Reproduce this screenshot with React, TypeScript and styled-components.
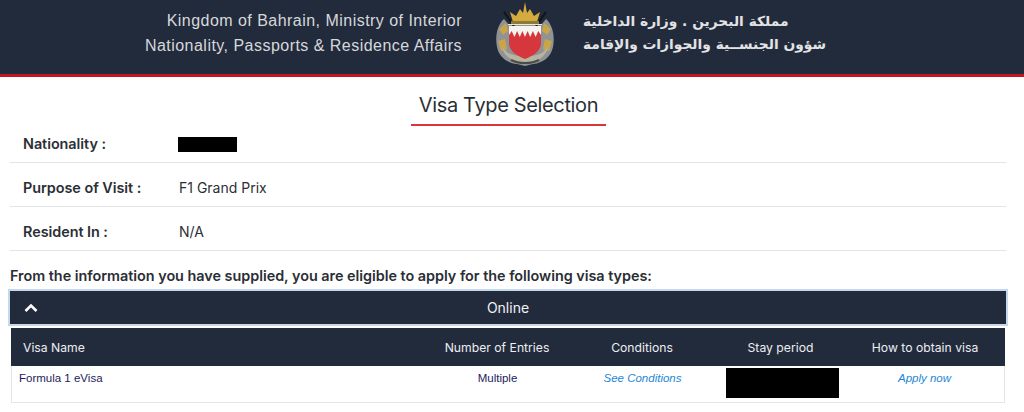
import React from "react";
import styled, { createGlobalStyle } from "styled-components";

const Global = createGlobalStyle`
  html, body { margin: 0; padding: 0; background: #fff; }
  body { font-family: Inter, "Liberation Sans", sans-serif; color: #212529; overflow: hidden; }
`;

const Page = styled.div`
  width: 1024px;
  height: 412px;
  overflow: hidden;
`;

const Banner = styled.header`
  height: 74px;
  background: #222b3c;
  border-bottom: 3px solid #c2171d;
  display: flex;
  align-items: center;
  padding-left: 130px;
`;

const EnglishTitle = styled.div`
  width: 332px;
  text-align: right;
  font-family: "Liberation Sans", Arial, sans-serif;
  font-size: 16px;
  line-height: 25px;
  letter-spacing: 0.47px;
  color: #d6d8db;
  margin-top: -8px;
  white-space: nowrap;
`;

const Crest = styled.svg`
  width: 60px;
  height: 66px;
  margin-left: 33px;
  margin-top: -6px;
  flex: none;
`;

const ArabicTitle = styled.div`
  margin-left: 28px;
  width: 243px;
  direction: rtl;
  text-align: left;
  font-family: "DejaVu Sans", sans-serif;
  font-size: 13.8px;
  font-weight: 700;
  line-height: 23px;
  color: #e2e3e5;
  white-space: nowrap;
  margin-top: -8px;
`;

const Heading = styled.h1`
  width: 195px;
  margin: 15px auto 0 411px;
  padding-bottom: 5px;
  border-bottom: 2px solid #d9363a;
  font-size: 20px;
  font-weight: 400;
  line-height: 27px;
  text-align: center;
  letter-spacing: -0.35px;
  color: #2a2f36;
`;

const Details = styled.div`
  margin: 0 18px 0 10px;
`;

const DetailRow = styled.div`
  box-sizing: border-box;
  height: 44px;
  border-bottom: 1px solid #e3e4e6;
  display: flex;
  align-items: flex-end;
  padding: 0 0 9px 13px;
  font-size: 14px;
  line-height: 18px;
  color: #2b2f35;

  &:first-child {
    height: 37px;
  }
`;

const DetailLabel = styled.div`
  width: 155px;
  font-size: 14.4px;
  font-weight: 600;
  letter-spacing: -0.04px;
`;

const DetailValue = styled.div`
  padding-left: 1px;
`;

const Redaction = styled.div<{ $w: number; $h: number }>`
  width: ${(p) => p.$w}px;
  height: ${(p) => p.$h}px;
  background: #000;
`;

const NationalityRedaction = styled(Redaction)`
  margin-bottom: 1px;
`;

const Intro = styled.p`
  margin: 16px 0 0 10px;
  font-size: 14.4px;
  font-weight: 600;
  line-height: 18px;
  letter-spacing: -0.02px;
  color: #2a2e35;
`;

const AccordionBar = styled.div`
  position: relative;
  margin: 6px 18px 0 10px;
  height: 33px;
  background: #222b3c;
  box-shadow: 0 0 0 2px #c6d8ee;
  display: flex;
  align-items: center;
  justify-content: center;
  color: #f1f2f4;
  font-size: 14px;
`;

const Chevron = styled.svg`
  position: absolute;
  left: 14px;
  top: 12px;
  width: 14px;
  height: 10px;
`;

const VisaTable = styled.div`
  margin: 4px 19px 0 11px;
  border: 1px solid #e5e6e8;
  border-top: 0;
`;

const VisaGrid = styled.div`
  display: grid;
  grid-template-columns: 420px 132px 158px 124px 1fr;
`;

const HeadRow = styled(VisaGrid)`
  box-sizing: border-box;
  height: 38px;
  margin: 0 -1px;
  padding-top: 1px;
  background: #222b3c;
  color: #eceef0;
  font-size: 12.2px;
  align-items: center;
`;

const HeadCell = styled.div<{ $left?: boolean }>`
  text-align: ${(p) => (p.$left ? "left" : "center")};
  padding-left: ${(p) => (p.$left ? "12px" : "0")};
`;

const StayHeadCell = styled(HeadCell)`
  padding-right: 5px;
`;

const BodyRow = styled(VisaGrid)`
  height: 36px;
  font-family: "Liberation Sans", Arial, sans-serif;
  font-size: 11.5px;
  line-height: 13px;
  color: #241d5c;
`;

const BodyCell = styled.div<{ $left?: boolean }>`
  padding-top: 6px;
  text-align: ${(p) => (p.$left ? "left" : "center")};
  padding-left: ${(p) => (p.$left ? "7px" : "0")};
  padding-right: ${(p) => (p.$left ? "0" : "1px")};
`;

const VisaLink = styled.a`
  color: #1e86d6;
  font-style: italic;
  text-decoration: none;
`;

const RedactedCell = styled.div`
  display: flex;
  justify-content: center;
  padding: 2px 3px 0 0;
`;

export default function App() {
  return (
    <Page>
      <Global />
      <Banner>
        <EnglishTitle>
          Kingdom of Bahrain, Ministry of Interior
          <br />
          Nationality, Passports &amp; Residence Affairs
        </EnglishTitle>
        <Crest viewBox="0 0 60 66">
          <path d="M9 18 C2 24 0 36 2 46 C4 56 12 62 22 63 L30 65 L38 63 C48 62 56 56 58 46 C60 36 58 24 51 18 L46 24 H14 Z" fill="#8f9396" />
          <path d="M4 28 L11 22 L13 30 L8 34 Z M56 28 L49 22 L47 30 L52 34 Z M3 40 L10 38 L12 48 L6 50 Z M57 40 L50 38 L48 48 L54 50 Z" fill="#c9a548" />
          <path d="M7 46 C9 56 18 61 30 62 C42 61 51 56 53 46 L49 50 C44 57 16 57 11 50 Z" fill="#b7b4a0" />
          <path d="M9 11 L19 25 M51 11 L41 25" stroke="#14161c" strokeWidth="2.2" />
          <path d="M18 21 L15 11 L21 15 L25 8 L28 12 L30 1 L32 12 L35 8 L39 15 L45 11 L42 21 Z" fill="#d6ab3d" />
          <rect x="16" y="20" width="28" height="3" fill="#8a7a3c" />
          <path d="M13 23 H47 V24 H13 Z" fill="#f1e8c6" />
          <path d="M14 25 H46 V42 C46 50 38 55 30 58 C22 55 14 50 14 42 Z" fill="#d5373c" />
          <path d="M14 25 H46 V34 L43.3 30 L40.6 36 L37.9 30 L35.2 36 L32.6 30 L30 36 L27.4 30 L24.8 36 L22.1 30 L19.4 36 L16.7 30 L14 34 Z" fill="#f5f3ef" />
          <path d="M16 59 C24 63 36 63 44 59" stroke="#4a4a46" strokeWidth="2" fill="none" />
        </Crest>
        <ArabicTitle>
          مملكة البحرين . وزارة الداخلية
          <br />
          شؤون الجنســية والجوازات والإقامة
        </ArabicTitle>
      </Banner>
      <Heading>Visa Type Selection</Heading>
      <Details>
        <DetailRow>
          <DetailLabel>Nationality :</DetailLabel>
          <NationalityRedaction $w={59} $h={15} />
        </DetailRow>
        <DetailRow>
          <DetailLabel>Purpose of Visit :</DetailLabel>
          <DetailValue>F1 Grand Prix</DetailValue>
        </DetailRow>
        <DetailRow>
          <DetailLabel>Resident In :</DetailLabel>
          <DetailValue>N/A</DetailValue>
        </DetailRow>
      </Details>
      <Intro>From the information you have supplied, you are eligible to apply for the following visa types:</Intro>
      <AccordionBar>
        <Chevron viewBox="0 0 14 10">
          <path d="M1.5 8 L7 2.5 L12.5 8" stroke="#fff" strokeWidth="2.6" fill="none" />
        </Chevron>
        Online
      </AccordionBar>
      <VisaTable>
        <HeadRow>
          <HeadCell $left>Visa Name</HeadCell>
          <HeadCell>Number of Entries</HeadCell>
          <HeadCell>Conditions</HeadCell>
          <StayHeadCell>Stay period</StayHeadCell>
          <HeadCell>How to obtain visa</HeadCell>
        </HeadRow>
        <BodyRow>
          <BodyCell $left>Formula 1 eVisa</BodyCell>
          <BodyCell>Multiple</BodyCell>
          <BodyCell>
            <VisaLink href="#">See Conditions</VisaLink>
          </BodyCell>
          <RedactedCell>
            <Redaction $w={113} $h={30} />
          </RedactedCell>
          <BodyCell>
            <VisaLink href="#">Apply now</VisaLink>
          </BodyCell>
        </BodyRow>
      </VisaTable>
    </Page>
  );
}
